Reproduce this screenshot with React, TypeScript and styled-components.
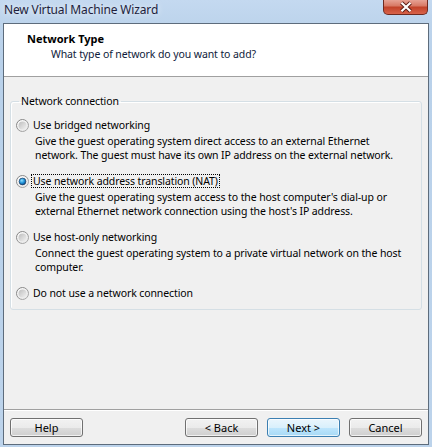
import styled, { createGlobalStyle } from "styled-components";

const GlobalStyle = createGlobalStyle`
  html, body {
    margin: 0;
    padding: 0;
    background: #b9d1ea;
  }
  body {
    font-family: "Noto Sans", "DejaVu Sans", sans-serif;
  }
`;

const options = [
  {
    label: "Use bridged networking",
    desc: [
      "Give the guest operating system direct access to an external Ethernet",
      "network. The guest must have its own IP address on the external network.",
    ],
  },
  {
    label: "Use network address translation (NAT)",
    desc: [
      "Give the guest operating system access to the host computer's dial-up or",
      "external Ethernet network connection using the host's IP address.",
    ],
    checked: true,
  },
  {
    label: "Use host-only networking",
    desc: [
      "Connect the guest operating system to a private virtual network on the host",
      "computer.",
    ],
  },
  {
    label: "Do not use a network connection",
    desc: [],
  },
];

function RadioIcon({ checked }: { checked?: boolean }) {
  return (
    <RadioSvg viewBox="0 0 13 13">
      <defs>
        <linearGradient id="rim" x1="0" y1="0" x2="1" y2="1">
          <stop offset="0" stopColor="#7a7a7a" />
          <stop offset="1" stopColor="#b0b0b0" />
        </linearGradient>
        <radialGradient id="face" cx="0.35" cy="0.3" r="0.8">
          <stop offset="0" stopColor="#ffffff" />
          <stop offset="1" stopColor="#e6e6e6" />
        </radialGradient>
        <linearGradient id="well" x1="0" y1="0" x2="1" y2="1">
          <stop offset="0" stopColor="#bdbdbd" />
          <stop offset="1" stopColor="#f2f2f2" />
        </linearGradient>
        <radialGradient id="dot" cx="0.4" cy="0.35" r="0.7">
          <stop offset="0" stopColor="#8fe0ff" />
          <stop offset="0.55" stopColor="#1d8fd6" />
          <stop offset="1" stopColor="#0b3f78" />
        </radialGradient>
      </defs>
      <circle cx="6.5" cy="6.5" r="6" fill="url(#face)" stroke="url(#rim)" strokeWidth="1" />
      {checked ? (
        <circle cx="6.5" cy="6.5" r="3.4" fill="url(#dot)" stroke="#1f3f66" strokeWidth="0.7" />
      ) : (
        <circle cx="6.5" cy="6.5" r="4" fill="url(#well)" />
      )}
    </RadioSvg>
  );
}

export default function App() {
  return (
    <>
      <GlobalStyle />
      <Window>
        <TitleBar>
          <Caption>New Virtual Machine Wizard</Caption>
          <CloseButton>
            <svg width="16" height="12" viewBox="0 0 16 12">
              <path
                d="M3.5 1.8 L12.5 10.2 M12.5 1.8 L3.5 10.2"
                fill="none"
                stroke="#5a1d15"
                strokeWidth="4"
              />
              <path
                d="M3.5 1.8 L12.5 10.2 M12.5 1.8 L3.5 10.2"
                fill="none"
                stroke="#ffffff"
                strokeWidth="2.2"
              />
            </svg>
          </CloseButton>
        </TitleBar>
        <Client>
          <Header>
            <HeaderTitle>Network Type</HeaderTitle>
            <HeaderSub>What type of network do you want to add?</HeaderSub>
          </Header>
          <Body>
            <Group>
              <Legend>Network connection</Legend>
              {options.map((o) => (
                <Option key={o.label}>
                  <OptionRow>
                    <RadioIcon checked={o.checked} />
                    <OptionLabel $focused={o.checked}>{o.label}</OptionLabel>
                  </OptionRow>
                  {o.desc.length > 0 && (
                    <OptionDesc>
                      {o.desc.map((line) => (
                        <div key={line}>{line}</div>
                      ))}
                    </OptionDesc>
                  )}
                </Option>
              ))}
            </Group>
          </Body>
          <Footer>
            <Button>Help</Button>
            <Spacer />
            <Button>&lt; Back</Button>
            <Button $primary>Next &gt;</Button>
            <Button>Cancel</Button>
          </Footer>
        </Client>
      </Window>
    </>
  );
}

const Window = styled.div`
  width: 432px;
  height: 447px;
  display: flex;
  flex-direction: column;
  background: linear-gradient(180deg, #c4d9f0 0px, #bdd4ec 23px, #b9d1ea 60px, #bcd3eb 100%);
  box-sizing: border-box;
  font-size: 10.5px;
  letter-spacing: -0.1px;
  color: #000;
`;

const TitleBar = styled.div`
  height: 23px;
  display: flex;
  align-items: flex-start;
  padding-left: 4px;
  padding-right: 4px;
`;

const Caption = styled.div`
  font-size: 12px;
  letter-spacing: -0.15px;
  line-height: 20px;
  color: #1e1e3c;
  text-shadow: 0 0 6px rgba(255, 255, 255, 0.9);
`;

const CloseButton = styled.div`
  margin-left: auto;
  margin-top: -1px;
  width: 45px;
  height: 16px;
  box-sizing: border-box;
  border: 1px solid #6e2a20;
  border-top: none;
  border-radius: 0 0 5px 5px;
  background: linear-gradient(180deg, #e9a99c 0%, #d87a66 45%, #c2432a 55%, #d8634a 100%);
  display: flex;
  align-items: center;
  justify-content: center;
`;

const Client = styled.div`
  flex: 1;
  margin: 0 3px 2px 3px;
  border: 1px solid #5d6c7c;
  background: #f0f0f0;
  display: flex;
  flex-direction: column;
`;

const Header = styled.div`
  height: 53px;
  background: #ffffff;
  border-bottom: 1px solid #a0a0a0;
  padding: 8px 0 0 23px;
  box-sizing: border-box;
`;

const HeaderTitle = styled.div`
  font-size: 11px;
  letter-spacing: 0;
  font-weight: bold;
  line-height: 14px;
`;

const HeaderSub = styled.div`
  margin-top: 1px;
  padding-left: 24px;
  line-height: 14px;
  color: #0e1a3a;
`;

const Body = styled.div`
  flex: 1;
  padding: 17px 6px 0 6px;
`;

const Group = styled.fieldset`
  margin: 0;
  padding: 10px 8px 9px 5px;
  border: 1px solid #d5dfe5;
  border-radius: 3px;
  box-shadow: inset 1px 1px 0 #ffffff;
  display: flex;
  flex-direction: column;
  gap: 12px;
`;

const Legend = styled.legend`
  padding: 0 2px;
  margin-left: 3px;
  line-height: 14px;
`;

const Option = styled.div`
  display: flex;
  flex-direction: column;
`;

const OptionRow = styled.div`
  display: flex;
  align-items: center;
  gap: 3px;
  height: 14px;
`;

const RadioSvg = styled.svg`
  width: 13px;
  height: 13px;
  flex-shrink: 0;
`;

const OptionLabel = styled.span<{ $focused?: boolean }>`
  line-height: 12px;
  padding: 0 1px;
  outline: ${(p) => (p.$focused ? "1px dotted #000" : "none")};
`;

const OptionDesc = styled.div`
  margin-top: 2px;
  margin-left: 19px;
  line-height: 14px;
  white-space: nowrap;
`;

const Footer = styled.div`
  border-top: 1px solid #a0a0a0;
  box-shadow: inset 0 1px 0 #ffffff;
  padding: 8px 6px 7px 6px;
  display: flex;
  align-items: center;
  gap: 9px;
`;

const Spacer = styled.div`
  flex: 1;
`;

const Button = styled.button<{ $primary?: boolean }>`
  width: 73px;
  height: 19px;
  padding: 0;
  font-family: inherit;
  font-size: 11px;
  color: #000;
  border-radius: 3px;
  border: 1px solid ${(p) => (p.$primary ? "#3c7fb1" : "#707070")};
  background: ${(p) =>
    p.$primary
      ? "linear-gradient(180deg, #eaf6fd 0%, #d9f0fc 50%, #bee6fd 51%, #a7d9f5 100%)"
      : "linear-gradient(180deg, #f2f2f2 0%, #ebebeb 50%, #dddddd 51%, #cfcfcf 100%)"};
  box-shadow: inset 0 0 0 1px rgba(255, 255, 255, 0.7);
`;
